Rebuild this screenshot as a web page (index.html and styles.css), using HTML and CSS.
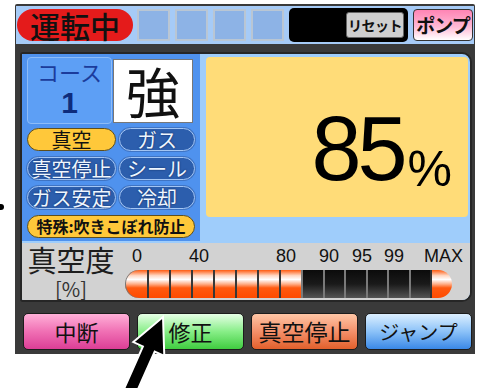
FILE: index.html
```html
<!DOCTYPE html>
<html lang="ja">
<head>
    <meta charset="UTF-8">
    <meta name="viewport" content="width=device-width, initial-scale=1.0">
    <title>真空パネル</title>
    <link rel="stylesheet" href="styles.css">
</head>
<body>
    <div class="device">
        <div class="topbar">
            <div class="status">運転中</div>
            <div class="slot"></div>
            <div class="slot"></div>
            <div class="slot"></div>
            <div class="slot"></div>
            <div class="reset-box"><button class="reset">リセット</button></div>
            <button class="pump">ポンプ</button>
        </div>

        <div class="panel">
            <div class="panel-top">
                <div class="mode">
                    <div class="course-row">
                        <div class="course">
                            <span class="course-label">コース</span>
                            <span class="course-num">1</span>
                        </div>
                        <div class="strength"><span>強</span></div>
                    </div>
                    <div class="steps">
                        <span class="step on">真空</span>
                        <span class="step">ガス</span>
                        <span class="step">真空停止</span>
                        <span class="step">シール</span>
                        <span class="step">ガス安定</span>
                        <span class="step">冷却</span>
                        <span class="step on special">特殊:吹きこぼれ防止</span>
                    </div>
                </div>
                <div class="reading"><span class="num">85</span><span class="pct">%</span></div>
            </div>

            <div class="gauge">
                <div class="gauge-title">
                    <span class="gauge-name">真空度</span>
                    <span class="gauge-unit">[%]</span>
                </div>
                <div class="meter">
                    <div class="ticks">
                        <span class="tick" style="left: 7px">0</span>
                        <span class="tick" style="left: 64px">40</span>
                        <span class="tick" style="left: 151px">80</span>
                        <span class="tick" style="left: 194px">90</span>
                        <span class="tick" style="left: 227px">95</span>
                        <span class="tick" style="left: 259px">99</span>
                        <span class="tick" style="left: 299px">MAX</span>
                    </div>
                    <div class="bar">
                        <span class="cap cap-l hot"></span>
                        <span class="seg hot"></span>
                        <span class="seg hot"></span>
                        <span class="seg hot"></span>
                        <span class="seg hot"></span>
                        <span class="seg hot"></span>
                        <span class="seg hot"></span>
                        <span class="seg hot"></span>
                        <span class="seg cold"></span>
                        <span class="seg cold"></span>
                        <span class="seg cold"></span>
                        <span class="seg cold"></span>
                        <span class="seg cold"></span>
                        <span class="seg cold"></span>
                        <span class="cap cap-r hot"></span>
                    </div>
                </div>
            </div>
        </div>

        <div class="actions">
            <button class="act pause">中断</button>
            <button class="act edit">修正</button>
            <button class="act stop">真空停止</button>
            <button class="act jump">ジャンプ</button>
        </div>
    </div>

    <svg class="pointer" width="481" height="388" viewBox="0 0 481 388">
        <polygon points="163,317 164.3,355.9 154.7,351.6 134.4,397.3 122.6,392.1 142.9,346.4 133.3,342.1"
                 fill="#000" stroke="#fff" stroke-width="2" stroke-linejoin="miter"/>
    </svg>
    <span class="dot"></span>
</body>
</html>
```

FILE: styles.css
```css
* { box-sizing: border-box; }
body { margin: 0; width: 481px; height: 388px; overflow: hidden; position: relative; background: #fff; font-family: "Noto Sans CJK JP", "Liberation Sans", sans-serif; color: #111; }
button { font-family: "Noto Sans CJK JP", "Liberation Sans", sans-serif; padding: 0; color: #111; }

.device { margin: 4px 0 0 15px; width: 460px; height: 350px; padding: 2px 1px 0; background: #3a3a3a; border-radius: 2px 2px 0 0; }

/* top status bar */
.topbar { height: 38px; display: flex; align-items: center; gap: 5px; padding-left: 1px; background: #a6cbf7; }
.status { width: 116px; height: 32px; margin-right: -1px; border-radius: 16px; background: #e41b1b; font-size: 30px; font-weight: 500; line-height: 32px; text-align: center; }
.slot { width: 33px; height: 32px; background: #8db3e6; border: 2px solid #b9c6d4; }
.reset-box { width: 119px; height: 34px; display: flex; align-items: center; justify-content: flex-end; padding-right: 4px; background: #000; border-radius: 5px; }
.reset { width: 58px; height: 26px; background: #cfcfcf; border: 1px solid #666; border-radius: 3px; font-size: 14px; font-weight: 700; line-height: 24px; letter-spacing: -0.5px; white-space: nowrap; }
.pump { width: 60px; height: 32px; background: linear-gradient(#ff84b4, #ffb8d4 55%, #fff); border: 1px solid #333; border-radius: 4px; font-size: 19px; font-weight: 700; line-height: 30px; letter-spacing: -1px; white-space: nowrap; }

/* main panel */
.panel { margin: 8px 2px 0 4px; height: 250px; border: 2px solid #262626; border-radius: 3px 10px 10px 3px; background: #9fcdfb; overflow: hidden; }
.panel-top { height: 189px; display: flex; }
.mode { width: 178px; height: 187px; padding: 3px 5px 0; background: #4f92ee; }
.course-row { display: flex; gap: 1px; }
.course { width: 85px; height: 67px; display: flex; flex-direction: column; align-items: center; background: #5d9ff5; border: 1px solid #8dbcf8; border-radius: 4px; }
.course-label { font-size: 22px; line-height: 26px; color: #1b3c9c; }
.course-num { margin-top: 4px; font: 700 30px/1 "Liberation Sans", sans-serif; color: #0e2c7c; }
.strength { width: 80px; height: 64px; margin-top: 2px; display: flex; align-items: center; justify-content: center; background: #fff; border: 1px solid #777; font-size: 54px; line-height: 1; }

.steps { display: grid; grid-template-columns: 89px 76px; grid-auto-rows: 23px; column-gap: 3px; row-gap: 6px; margin-top: 4px; }
.step { border-radius: 12px; background: #2c5ead; border: 1px solid #a4c6f4; box-shadow: 0 0 0 1px #3f74c4; color: #eef6ff; font-size: 20px; line-height: 21px; text-align: center; text-shadow: 0 0 2px #0b2458; white-space: nowrap; }
.step.on { background: #ffc83a; border-color: #5e4e1c; box-shadow: none; color: #111; text-shadow: none; }
.step.special { grid-column: span 2; font-size: 16px; font-weight: 700; }

.reading { flex: 1; margin: 3px 2px 26px 6px; display: flex; align-items: flex-end; justify-content: flex-end; padding: 0 16px 23px 0; background: #ffdc78; border-radius: 4px; font-family: "Liberation Sans", sans-serif; color: #000; }
.num { font-size: 90px; line-height: 1; letter-spacing: -4px; }
.pct { margin-left: 4px; font-size: 50px; line-height: 1; }

/* vacuum gauge */
.gauge { height: 57px; display: flex; gap: 10px; padding: 2px 0 0 5px; background: #d2d2d2; }
.gauge-title { width: 88px; display: flex; flex-direction: column; align-items: center; }
.gauge-name { font-size: 29px; line-height: 1; color: #1d1d1d; }
.gauge-unit { margin-top: 5px; font-size: 20px; line-height: 1; color: #333; }
.meter { width: 343px; }
.ticks { position: relative; height: 25px; }
.tick { position: absolute; top: 1px; font: 18px "Liberation Sans", sans-serif; color: #111; }
.bar { display: flex; height: 28px; }
.cap { width: 22px; }
.cap-l { border-radius: 14px 0 0 14px; box-shadow: inset 1px 0 0 #777; }
.cap-r { border-radius: 0 14px 14px 0; border-left: 2px solid #333; }
.seg { width: 22px; border-left: 2px solid #383838; }
.seg.cold { width: 21.5px; border-left-color: #7a7a7a; background: linear-gradient(#0b0b0b, #1a1a1a 50%, #555); }
.hot { background: linear-gradient(#ff5a10 0%, #ffd8c4 20%, #fff 34%, #ffb08a 50%, #ff5a10 64%, #ff4a00 100%); }

/* bottom buttons */
.actions { display: flex; gap: 7px; margin: 11px 0 0 7px; height: 37px; }
.act { width: 107px; border: 1px solid #1c1c1c; border-radius: 5px; font-size: 22px; line-height: 35px; }
.pause { background: linear-gradient(#ffb0d8, #f070b4 50%, #dc3e96); }
.edit { background: linear-gradient(#e6ffe6, #88ee88 50%, #40cc40); }
.stop { background: linear-gradient(#ffc6a6, #f4906a 50%, #e2602c); font-size: 23px; }
.jump { background: linear-gradient(#dcefff, #8cc2f8 50%, #3a88e6); font-size: 20px; }

.pointer { position: absolute; left: 0; top: 0; pointer-events: none; }
.dot { position: absolute; left: -2px; top: 204px; width: 6px; height: 6px; border-radius: 50%; background: #000; }
```
